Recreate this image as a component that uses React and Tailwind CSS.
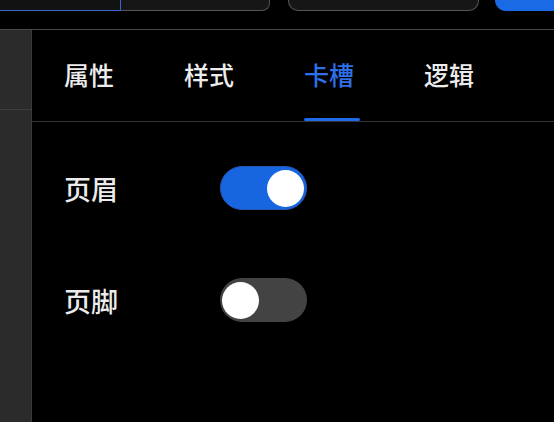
const tabs = ['属性', '样式', '卡槽', '逻辑'];

const slots = [
  { label: '页眉', on: true },
  { label: '页脚', on: false },
];

const Toggle = ({ on }) => (
  <div
    className={`flex h-[44px] w-[87px] items-center rounded-full px-[2px] ${
      on ? 'justify-end border border-[#2458b8] bg-[#1766df]' : 'justify-start bg-[#434343]'
    }`}
  >
    <div className="h-[37px] w-[37px] rounded-full bg-white" />
  </div>
);

const App = () => {
  return (
    <div
      className="flex h-[422px] w-[554px] flex-col overflow-hidden bg-black text-[#ececec]"
      style={{ fontFamily: '"Noto Sans CJK SC", "Noto Sans", sans-serif' }}
    >
      {/* cut-off toolbar at the top */}
      <div className="h-[30px] shrink-0 border-b border-[#4a4a4a]">
        <div className="flex h-[11px]">
          <div className="w-[121px] border-r border-b border-[#3a62cc] bg-[#121212]" />
          <div className="w-[149px] rounded-br-[8px] border-r border-b border-[#555] bg-[#161616]" />
          <div className="ml-[18px] w-[191px] rounded-b-[10px] border-x border-b border-[#555] bg-[#161616]" />
          <div className="ml-[16px] flex-1 rounded-bl-[12px] bg-[#1a6ae6]" />
        </div>
      </div>

      <div className="flex flex-1">
        <div className="w-[32px] shrink-0 border-r border-[#3a3a3a] bg-[#2b2b2b]">
          <div className="h-[80px] border-b border-[#3e3e3e]" />
        </div>

        <div className="flex flex-1 flex-col">
          <div className="flex h-[92px] gap-[70px] border-b border-[#333] pl-[32px]">
            {tabs.map((t, i) => (
              <div key={t} className="flex w-[50px] flex-col items-start">
                <span
                  className={`pt-[32px] text-[25px] leading-none font-medium whitespace-nowrap ${
                    i === 2 ? 'text-[#2f6fe8]' : 'text-[#ececec]'
                  }`}
                >
                  {t}
                </span>
                {i === 2 && <div className="mt-auto h-[3px] w-[56px] rounded-full bg-[#1f6ae8]" />}
              </div>
            ))}
          </div>

          <div className="flex flex-col gap-[68px] pt-[44px] pl-[32px]">
            {slots.map((s) => (
              <div key={s.label} className="flex items-center">
                <span className="w-[156px] text-[27px] leading-none font-medium">{s.label}</span>
                <Toggle on={s.on} />
              </div>
            ))}
          </div>
        </div>
      </div>
    </div>
  );
};

export default App;
